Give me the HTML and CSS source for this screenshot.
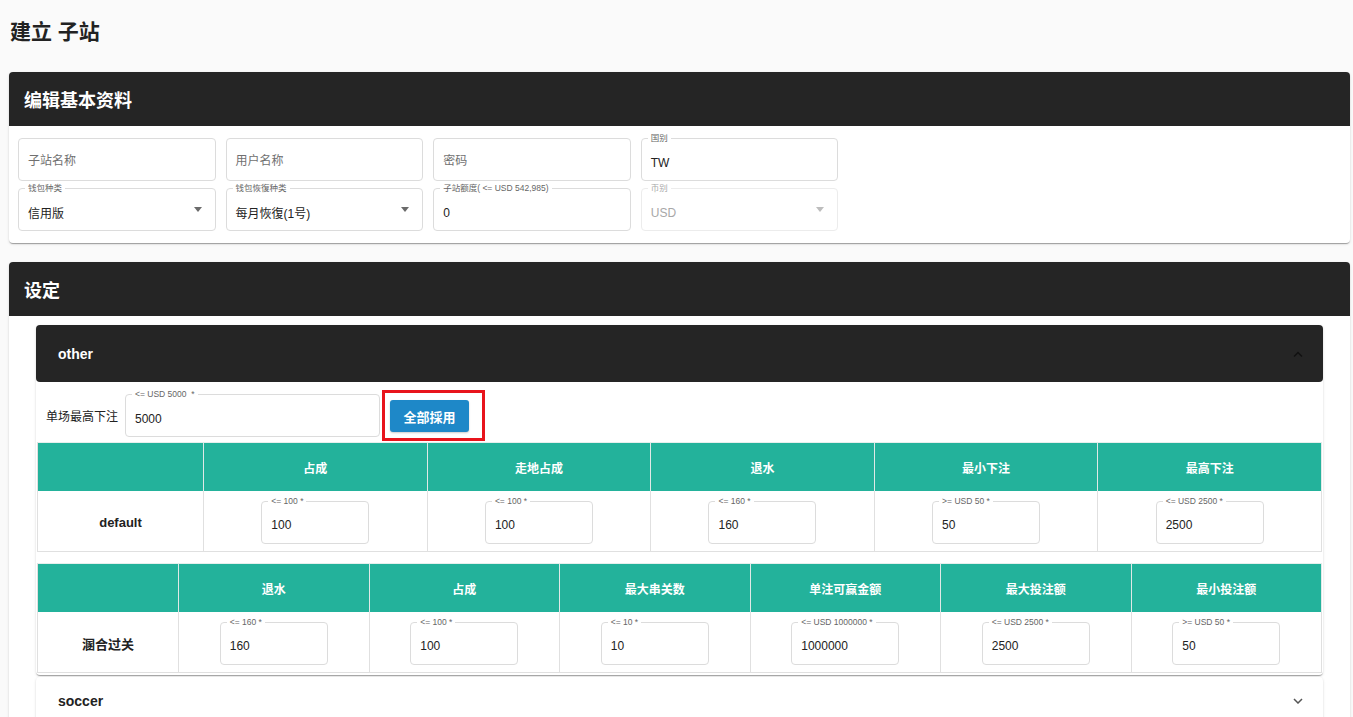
FILE: index.html
```html
<!DOCTYPE html>
<html lang="zh-CN">
<head>
<meta charset="utf-8">
<title>建立 子站</title>
<link rel="stylesheet" href="styles.css">
</head>
<body>
<div class="page">
  <h1 class="title">建立 子站</h1>

  <section class="card">
    <header class="card-head">编辑基本资料</header>
    <div class="card-body basic">
      <div class="form-grid">
        <div class="field"><span class="ph">子站名称</span></div>
        <div class="field"><span class="ph">用户名称</span></div>
        <div class="field"><span class="ph">密码</span></div>
        <div class="field labeled"><span class="flabel">国别</span><span class="fval">TW</span></div>

        <div class="field labeled"><span class="flabel">钱包种类</span><span class="fval">信用版</span><span class="caret"></span></div>
        <div class="field labeled"><span class="flabel">钱包恢復种类</span><span class="fval">每月恢復(1号)</span><span class="caret"></span></div>
        <div class="field labeled"><span class="flabel">子站额度( &lt;= USD 542,985)</span><span class="fval">0</span></div>
        <div class="field labeled disabled"><span class="flabel">币别</span><span class="fval">USD</span><span class="caret"></span></div>
      </div>
    </div>
  </section>

  <section class="card">
    <header class="card-head">设定</header>
    <div class="card-body settings">
      <div class="acc">
        <div class="acc-head dark">
          <span>other</span>
          <svg class="chev" width="10" height="6" viewBox="0 0 10 6"><polyline points="1,5.5 5,1.5 9,5.5" fill="none" stroke="#111" stroke-width="1.5"/></svg>
        </div>
        <div class="acc-body">
          <div class="limit-row">
            <span class="limit-label">单场最高下注</span>
            <div class="field labeled wide"><span class="flabel">&lt;= USD 5000 &nbsp;*</span><span class="fval">5000</span></div>
            <div class="mark">
              <button class="btn" type="button">全部採用</button>
            </div>
          </div>

          <div class="tbl tbl1">
            <div class="th"></div>
            <div class="th">占成</div>
            <div class="th">走地占成</div>
            <div class="th">退水</div>
            <div class="th">最小下注</div>
            <div class="th">最高下注</div>

            <div class="td name">default</div>
            <div class="td"><div class="field labeled small"><span class="flabel">&lt;= 100 *</span><span class="fval">100</span></div></div>
            <div class="td"><div class="field labeled small"><span class="flabel">&lt;= 100 *</span><span class="fval">100</span></div></div>
            <div class="td"><div class="field labeled small"><span class="flabel">&lt;= 160 *</span><span class="fval">160</span></div></div>
            <div class="td"><div class="field labeled small"><span class="flabel">&gt;= USD 50 *</span><span class="fval">50</span></div></div>
            <div class="td"><div class="field labeled small"><span class="flabel">&lt;= USD 2500 *</span><span class="fval">2500</span></div></div>
          </div>

          <div class="tbl tbl2">
            <div class="th"></div>
            <div class="th">退水</div>
            <div class="th">占成</div>
            <div class="th">最大串关数</div>
            <div class="th">单注可赢金额</div>
            <div class="th">最大投注额</div>
            <div class="th">最小投注额</div>

            <div class="td name">溷合过关</div>
            <div class="td"><div class="field labeled small"><span class="flabel">&lt;= 160 *</span><span class="fval">160</span></div></div>
            <div class="td"><div class="field labeled small"><span class="flabel">&lt;= 100 *</span><span class="fval">100</span></div></div>
            <div class="td"><div class="field labeled small"><span class="flabel">&lt;= 10 *</span><span class="fval">10</span></div></div>
            <div class="td"><div class="field labeled small"><span class="flabel">&lt;= USD 1000000 *</span><span class="fval">1000000</span></div></div>
            <div class="td"><div class="field labeled small"><span class="flabel">&lt;= USD 2500 *</span><span class="fval">2500</span></div></div>
            <div class="td"><div class="field labeled small"><span class="flabel">&gt;= USD 50 *</span><span class="fval">50</span></div></div>
          </div>
        </div>
      </div>

      <div class="acc">
        <div class="acc-head light">
          <span>soccer</span>
          <svg class="chev" width="10" height="6" viewBox="0 0 10 6"><polyline points="1,1 5,5 9,1" fill="none" stroke="#555" stroke-width="1.5"/></svg>
        </div>
      </div>
    </div>
  </section>
</div>
</body>
</html>
```

FILE: styles.css
```css
* { box-sizing: border-box; }

html, body {
  margin: 0;
  padding: 0;
  background: #fafafa;
  font-family: "Liberation Sans", "Noto Sans CJK SC", Arial, sans-serif;
  color: #222;
}

.page {
  padding: 0 3px 0 9px;
}

.title {
  margin: 0 0 26px;
  padding: 18px 0 0 1px;
  height: 46px;
  line-height: 28px;
  font-size: 21px;
  font-weight: bold;
  color: #222;
}

.card {
  background: #fff;
  border-radius: 4px;
  margin-bottom: 19px;
  box-shadow: 0 2px 1px -1px rgba(0,0,0,.2), 0 1px 1px 0 rgba(0,0,0,.14), 0 1px 3px 0 rgba(0,0,0,.12);
}

.card-head {
  height: 54px;
  background: #252525;
  color: #fff;
  border-radius: 4px 4px 0 0;
  padding-left: 15px;
  display: flex;
  align-items: center;
  font-size: 18px;
  font-weight: bold;
}

.card-body.basic {
  padding: 12px 9px 12px;
}

.form-grid {
  display: grid;
  grid-template-columns: repeat(4, 197.6px);
  column-gap: 10px;
  row-gap: 7px;
}

.field {
  position: relative;
  width: 100%;
  height: 43px;
  border: 1px solid #dcdcdc;
  border-radius: 4px;
  background: #fff;
  display: flex;
  align-items: center;
  padding: 0 9px;
  font-size: 12px;
  color: #222;
}

.ph {
  color: #707070;
}

.flabel {
  position: absolute;
  top: -6px;
  left: 6px;
  padding: 0 3px;
  background: #fff;
  font-size: 8.5px;
  line-height: 11px;
  color: #666;
  white-space: nowrap;
}

.labeled .fval {
  padding-top: 6px;
}

.caret {
  margin-left: auto;
  margin-right: 4px;
  width: 0;
  height: 0;
  border-left: 4px solid transparent;
  border-right: 4px solid transparent;
  border-top: 5px solid #6b6b6b;
}

.field.disabled {
  border-color: #ececec;
  color: #a8a8a8;
}
.field.disabled .flabel { color: #aaa; }
.field.disabled .caret { border-top-color: #bdbdbd; }

.card-body.settings {
  padding: 9px 27px 20px;
}

.acc {
  background: #fff;
  border-radius: 4px;
  box-shadow: 0 2px 1px -1px rgba(0,0,0,.2), 0 1px 1px 0 rgba(0,0,0,.14), 0 1px 3px 0 rgba(0,0,0,.12);
}
.acc + .acc {
  margin-top: 2px;
}

.acc-head {
  display: flex;
  align-items: center;
  justify-content: space-between;
  padding: 0 20px 0 22px;
  font-size: 14px;
  font-weight: bold;
}
.acc-head.dark {
  height: 57px;
  background: #252525;
  color: #fff;
  border-radius: 4px;
}
.acc-head.light {
  height: 48px;
  color: #222;
}

.chev { display: block; }

.acc-body {
  padding: 0 0 2px;
}

.limit-row {
  display: flex;
  align-items: center;
  padding: 8px 0 1px 10px;
}

.limit-label {
  font-size: 12px;
  color: #222;
  margin-right: 7px;
}

.field.wide {
  width: 255px;
}

.mark {
  margin-left: 2px;
  border: 3px solid #e8141c;
  padding: 7px 13px 6px 5px;
}

.btn {
  display: block;
  width: 79px;
  height: 32px;
  border: 0;
  border-radius: 3px;
  background: #1e88c8;
  color: #fff;
  font-family: "Liberation Sans", "Noto Sans CJK SC", sans-serif;
  font-size: 13px;
  font-weight: bold;
  box-shadow: 0 1px 2px rgba(0,0,0,.2);
}

.tbl {
  display: grid;
  margin: 0 1px;
  border-left: 1px solid #e0e0e0;
}
.tbl1 { grid-template-columns: 166px repeat(5, 1fr); }
.tbl2 { grid-template-columns: 141px repeat(6, 1fr); margin-top: 11px; }

.th {
  height: 49px;
  background: #23b29b;
  color: #fff;
  font-size: 12px;
  font-weight: bold;
  display: flex;
  align-items: center;
  justify-content: center;
  border-right: 1px solid #dfe9e7;
  border-top: 1px solid #e6efed;
}

.td {
  height: 61px;
  padding-top: 2px;
  background: #fff;
  border-right: 1px solid #e0e0e0;
  border-bottom: 1px solid #e0e0e0;
  display: flex;
  align-items: center;
  justify-content: center;
}

.td.name {
  font-size: 13px;
  font-weight: bold;
  color: #222;
}

.field.small {
  width: 108px;
}
```
